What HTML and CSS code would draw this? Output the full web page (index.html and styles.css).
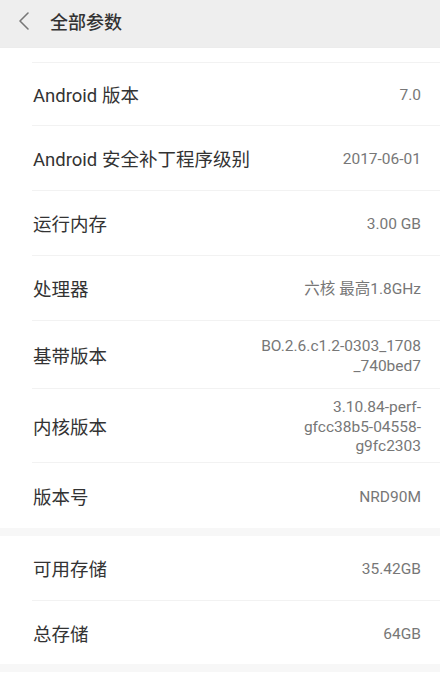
FILE: index.html
```html
<!DOCTYPE html>
<html lang="zh-CN">
<head>
<meta charset="utf-8">
<title>全部参数</title>
<link rel="stylesheet" href="styles.css">
</head>
<body>
<header class="topbar">
  <svg class="back" width="14" height="20" viewBox="0 0 14 20"><path d="M11 2 L3 10 L11 18" fill="none" stroke="#777" stroke-width="1.6" stroke-linecap="round" stroke-linejoin="round"/></svg>
  <h1 class="title">全部参数</h1>
</header>
<main>
  <section class="group">
    <div class="cut"></div>
    <div class="row first"><span class="label">Android 版本</span><span class="value">7.0</span></div>
    <div class="row"><span class="label">Android 安全补丁程序级别</span><span class="value">2017-06-01</span></div>
    <div class="row"><span class="label">运行内存</span><span class="value">3.00 GB</span></div>
    <div class="row"><span class="label">处理器</span><span class="value">六核 最高1.8GHz</span></div>
    <div class="row tall2"><span class="label">基带版本</span><span class="value">BO.2.6.c1.2-0303_1708<br>_740bed7</span></div>
    <div class="row tall3"><span class="label">内核版本</span><span class="value">3.10.84-perf-<br>gfcc38b5-04558-<br>g9fc2303</span></div>
    <div class="row last"><span class="label">版本号</span><span class="value">NRD90M</span></div>
  </section>
  <section class="group">
    <div class="row"><span class="label">可用存储</span><span class="value">35.42GB</span></div>
    <div class="row last short"><span class="label">总存储</span><span class="value">64GB</span></div>
  </section>
  <section class="group tail"></section>
</main>
</body>
</html>
```
FILE: styles.css
```css
html, body {
  margin: 0;
  padding: 0;
  background: #f7f7f7;
  font-family: Roboto, "Noto Sans CJK SC", sans-serif;
}
.topbar {
  height: 47px;
  background: #eeeeee;
  display: flex;
  align-items: center;
  padding-left: 17px;
  border-bottom: 1px solid #ececec;
}
.back {
  display: block;
  margin-top: -6px;
}
.title {
  margin: -6px 0 0 19px;
  font-size: 18px;
  font-weight: 500;
  color: #333;
}
.group {
  background: #fff;
  margin-bottom: 8px;
}
.cut {
  height: 14px;
  margin-left: 32px;
  border-bottom: 1px solid #f2f2f2;
}
.row {
  display: flex;
  justify-content: space-between;
  align-items: center;
  min-height: 64px;
  margin-left: 32px;
  padding-right: 19px;
  border-bottom: 1px solid #f2f2f2;
}
.row.first { min-height: 62px; }
.row.tall2 { min-height: 67px; }
.row.tall3 { min-height: 73px; }
.row.last { border-bottom: none; min-height: 65px; }
.row.last.short { min-height: 63px; }
.label {
  font-size: 18.5px;
  color: #333;
  padding-left: 1px;
}
.value {
  font-size: 15.5px;
  color: #777;
  text-align: right;
  line-height: 19.5px;
  padding-top: 4px;
}
.group.tail {
  height: 30px;
  margin-bottom: 0;
  margin-top: 4px;
}
```
